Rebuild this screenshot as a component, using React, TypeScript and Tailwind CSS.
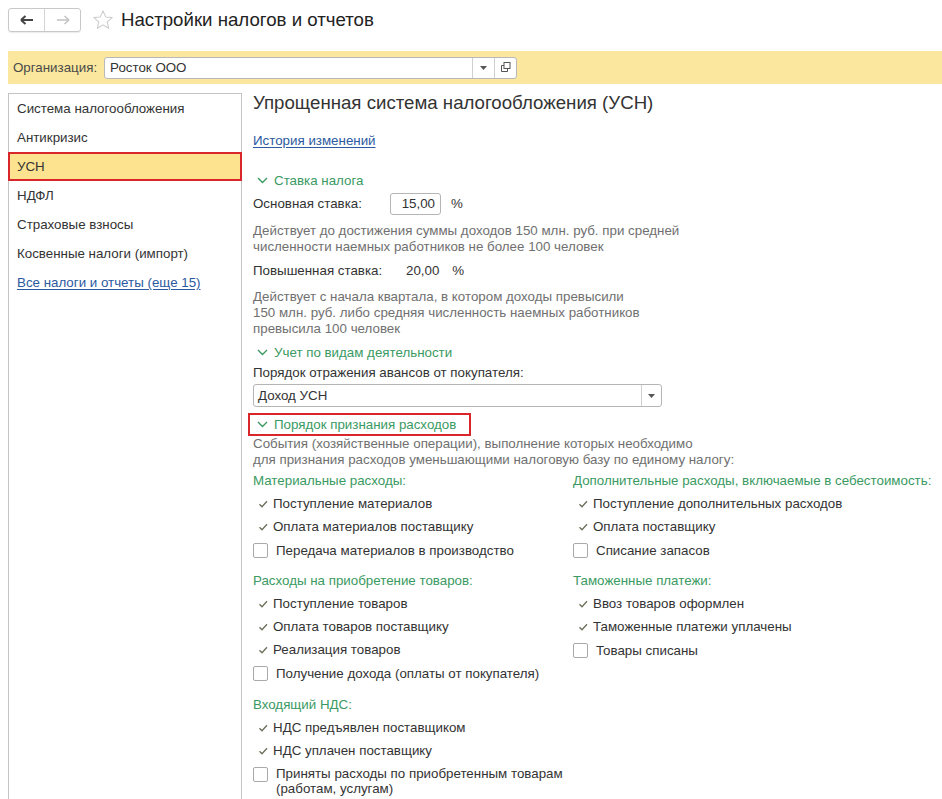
import React from "react";

const green = "text-[#3a9a62]";

function Chevron() {
  return (
    <svg width="11" height="7" viewBox="0 0 11 7" className="shrink-0">
      <polyline points="1,1 5.5,5.5 10,1" fill="none" stroke="#3a9a62" strokeWidth="1.4" />
    </svg>
  );
}

function Check() {
  return (
    <svg width="10" height="8" viewBox="0 0 10 8" className="shrink-0">
      <polyline points="1.5,4.2 4,6.8 9,1.2" fill="none" stroke="#6e6e5a" strokeWidth="1.3" />
    </svg>
  );
}

function CheckItem({ text }: { text: string }) {
  return (
    <div className="flex items-center h-[23px] pl-[5px] gap-[5px] text-[13.33px] leading-[16px] text-[#333] whitespace-nowrap">
      <Check />
      <span>{text}</span>
    </div>
  );
}

function BoxItem({ text, tall }: { text: React.ReactNode; tall?: boolean }) {
  return (
    <div
      className={`flex ${tall ? "items-start" : "items-center h-[24px]"} text-[13.33px] text-[#333] whitespace-nowrap`}
    >
      <div
        className={`w-[15px] h-[15px] border border-[#a9a9a9] rounded-[2px] bg-white shrink-0 ${tall ? "mt-[1px]" : ""}`}
      />
      <span className="ml-[8px] leading-[15px]">{text}</span>
    </div>
  );
}

function GroupTitle({ text }: { text: string }) {
  return (
    <div className={`h-[16px] leading-[16px] text-[13.33px] ${green} whitespace-nowrap`}>{text}</div>
  );
}

function Section({ text, boxed }: { text: string; boxed?: boolean }) {
  return (
    <div
      className={`flex items-center gap-[6px] h-[23px] text-[13.33px] whitespace-nowrap ${green} ${
        boxed ? "border-2 border-[#d9262b] w-[223px] ml-[-5px] pl-[7px]" : "pl-[4px]"
      }`}
    >
      <Chevron />
      <span>{text}</span>
    </div>
  );
}

export default function App() {
  return (
    <div
      className="w-[942px] h-[799px] overflow-hidden bg-white text-[#333]"
      style={{ fontFamily: '"Liberation Sans", Arial, sans-serif' }}
    >
      {/* Header */}
      <div className="flex items-center pt-[5px] pl-[8px] h-[29px] box-content">
        <div className="flex h-[24px] border border-[#c8c8c8] rounded-[3px] shadow-[0_1px_1px_rgba(0,0,0,0.08)]">
          <div className="w-[36px] flex items-center justify-center border-r border-[#d4d4d4]">
            <svg width="14" height="10" viewBox="0 0 14 10">
              <path d="M1 5 H13" stroke="#444" strokeWidth="2" />
              <path d="M1 5 L5.5 1 M1 5 L5.5 9" stroke="#444" strokeWidth="2" fill="none" />
            </svg>
          </div>
          <div className="w-[35px] flex items-center justify-center">
            <svg width="14" height="10" viewBox="0 0 14 10">
              <path d="M1 5 H13" stroke="#c4c4c4" strokeWidth="1.6" />
              <path d="M13 5 L8.5 1 M13 5 L8.5 9" stroke="#c4c4c4" strokeWidth="1.6" fill="none" />
            </svg>
          </div>
        </div>
        <svg width="22" height="22" viewBox="0 0 24 24" className="ml-[11px]">
          <polygon
            points="12,2 14.9,8.6 22,9.3 16.6,14 18.2,21 12,17.3 5.8,21 7.4,14 2,9.3 9.1,8.6"
            fill="none"
            stroke="#c9c9c9"
            strokeWidth="1.1"
            strokeLinejoin="round"
          />
        </svg>
        <div className="ml-[7px] text-[18.67px] text-[#222] leading-[22px] whitespace-nowrap">
          Настройки налогов и отчетов
        </div>
      </div>

      {/* Organization bar */}
      <div className="mt-[17px] ml-[8px] h-[33px] bg-[#fbe79d] flex items-center">
        <span className="ml-[5px] text-[13.33px] text-[#4a4a4a] whitespace-nowrap">Организация:</span>
        <div className="ml-[7px] w-[413px] h-[22px] bg-white border border-[#b8b8b8] rounded-[3px] flex items-center">
          <span className="flex-1 pl-[5px] text-[13.33px] text-[#333]">Росток ООО</span>
          <div className="w-[22px] h-full border-l border-[#cfcfcf] flex items-center justify-center">
            <svg width="7" height="4" viewBox="0 0 7 4">
              <polygon points="0,0 7,0 3.5,4" fill="#555" />
            </svg>
          </div>
          <div className="w-[22px] h-full border-l border-[#cfcfcf] flex items-center justify-center">
            <svg width="11" height="11" viewBox="0 0 11 11">
              <rect x="4" y="0.5" width="6" height="6" fill="none" stroke="#555" strokeWidth="1" />
              <path d="M4 3.5 H1.5 V9.5 H7.5 V6.5" fill="none" stroke="#555" strokeWidth="1" />
            </svg>
          </div>
        </div>
      </div>

      {/* Body */}
      <div className="flex mt-[9px]">
        {/* Left nav */}
        <div className="ml-[8px] w-[234px] h-[720px] border border-[#c4c4c4] shrink-0">
          {["Система налогообложения", "Антикризис"].map((t) => (
            <div key={t} className="h-[29px] flex items-center pl-[8px] text-[13.33px] text-[#333]">
              {t}
            </div>
          ))}
          <div className="h-[29px] flex items-center pl-[7px] text-[13.33px] text-[#333] bg-[#fde38f] border-2 border-[#d9262b] mx-[-1px]">
            УСН
          </div>
          {["НДФЛ", "Страховые взносы", "Косвенные налоги (импорт)"].map((t) => (
            <div key={t} className="h-[29px] flex items-center pl-[8px] text-[13.33px] text-[#333]">
              {t}
            </div>
          ))}
          <div className="h-[29px] flex items-center pl-[8px] text-[13.33px] text-[#2c5aa0] underline underline-offset-2">
            Все налоги и отчеты (еще 15)
          </div>
        </div>

        {/* Right content */}
        <div className="pl-[11px] flex-1">
          <div className="h-[20px] leading-[20px] text-[18.67px] text-[#333] whitespace-nowrap">
            Упрощенная система налогообложения (УСН)
          </div>
          <div className="mt-[20px] h-[16px] leading-[16px] text-[13.33px] text-[#2c5aa0] underline underline-offset-2">
            История изменений
          </div>

          <div className="mt-[20px]">
            <Section text="Ставка налога" />
          </div>
          <div className="mt-[1px] flex items-center h-[22px] text-[13.33px] whitespace-nowrap">
            <span className="w-[137px] shrink-0 text-[#333]">Основная ставка:</span>
            <div className="w-[51px] h-[22px] border border-[#b5b5b5] rounded-[3px] flex items-center justify-end pr-[5px] text-[#333]">
              15,00
            </div>
            <span className="ml-[10px] text-[#333]">%</span>
          </div>
          <div className="mt-[8px] text-[13.33px] leading-[16px] text-[#707070] whitespace-nowrap">
            Действует до достижения суммы доходов 150 млн. руб. при средней
            <br />
            численности наемных работников не более 100 человек
          </div>
          <div className="mt-[8px] flex items-center h-[16px] text-[13.33px] text-[#333] whitespace-nowrap">
            <span className="w-[153px] shrink-0">Повышенная ставка:</span>
            <span>20,00</span>
            <span className="ml-[13px]">%</span>
          </div>
          <div className="mt-[10px] text-[13.33px] leading-[16px] text-[#707070] whitespace-nowrap">
            Действует с начала квартала, в котором доходы превысили
            <br />
            150 млн. руб. либо средняя численность наемных работников
            <br />
            превысила 100 человек
          </div>

          <div className="mt-[4px]">
            <Section text="Учет по видам деятельности" />
          </div>
          <div className="h-[16px] leading-[16px] text-[13.33px] text-[#333] mt-[1px]">
            Порядок отражения авансов от покупателя:
          </div>
          <div className="mt-[3px] w-[409px] h-[23px] border border-[#b5b5b5] rounded-[3px] flex items-center">
            <span className="flex-1 pl-[4px] text-[13.33px] text-[#333]">Доход УСН</span>
            <div className="w-[20px] h-full border-l border-[#cfcfcf] flex items-center justify-center">
              <svg width="7" height="4" viewBox="0 0 7 4">
                <polygon points="0,0 7,0 3.5,4" fill="#555" />
              </svg>
            </div>
          </div>

          <div className="mt-[6px]">
            <Section text="Порядок признания расходов" boxed />
          </div>
          <div className="text-[13.33px] leading-[16px] text-[#707070] whitespace-nowrap">
            События (хозяйственные операции), выполнение которых необходимо
            <br />
            для признания расходов уменьшающими налоговую базу по единому налогу:
          </div>

          <div className="mt-[5px] grid grid-cols-[320px_1fr]">
            <div>
              <GroupTitle text="Материальные расходы:" />
              <div className="mt-[3px]">
                <CheckItem text="Поступление материалов" />
                <CheckItem text="Оплата материалов поставщику" />
                <BoxItem text="Передача материалов в производство" />
              </div>
            </div>
            <div>
              <GroupTitle text="Дополнительные расходы, включаемые в себестоимость:" />
              <div className="mt-[3px]">
                <CheckItem text="Поступление дополнительных расходов" />
                <CheckItem text="Оплата поставщику" />
                <BoxItem text="Списание запасов" />
              </div>
            </div>

            <div className="mt-[11px]">
              <GroupTitle text="Расходы на приобретение товаров:" />
              <div className="mt-[3px]">
                <CheckItem text="Поступление товаров" />
                <CheckItem text="Оплата товаров поставщику" />
                <CheckItem text="Реализация товаров" />
                <BoxItem text="Получение дохода (оплаты от покупателя)" />
              </div>
            </div>
            <div className="mt-[11px]">
              <GroupTitle text="Таможенные платежи:" />
              <div className="mt-[3px]">
                <CheckItem text="Ввоз товаров оформлен" />
                <CheckItem text="Таможенные платежи уплачены" />
                <BoxItem text="Товары списаны" />
              </div>
            </div>

            <div className="mt-[12px]">
              <GroupTitle text="Входящий НДС:" />
              <div className="mt-[3px]">
                <CheckItem text="НДС предъявлен поставщиком" />
                <CheckItem text="НДС уплачен поставщику" />
                <div className="mt-[4px]">
                  <BoxItem
                    tall
                    text={
                      <>
                        Приняты расходы по приобретенным товарам
                        <br />
                        (работам, услугам)
                      </>
                    }
                  />
                </div>
              </div>
            </div>
            <div />
          </div>
        </div>
      </div>
    </div>
  );
}
